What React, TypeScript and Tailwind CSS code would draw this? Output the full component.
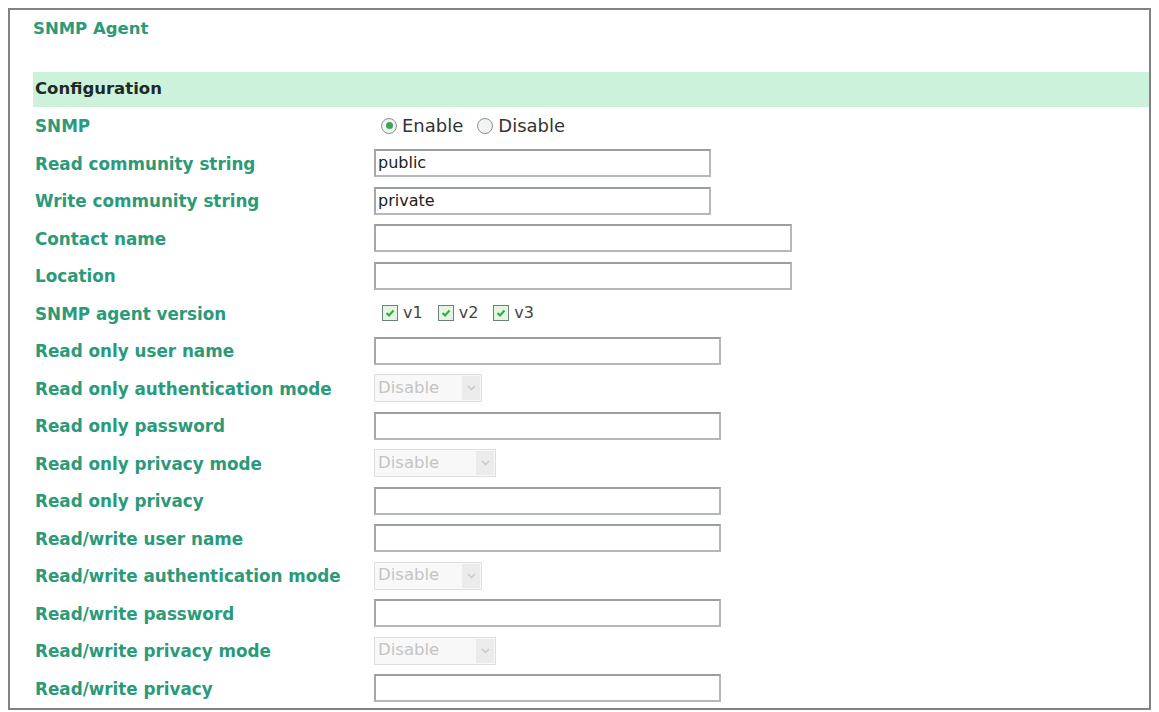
import type { ReactNode } from "react";

type Field =
  | { kind: "radio"; label: string }
  | { kind: "text"; label: string; width: string; value?: string }
  | { kind: "checks"; label: string }
  | { kind: "select"; label: string; width: string };

const FIELDS: Field[] = [
  { kind: "radio", label: "SNMP" },
  { kind: "text", label: "Read community string", width: "w-[337px]", value: "public" },
  { kind: "text", label: "Write community string", width: "w-[337px]", value: "private" },
  { kind: "text", label: "Contact name", width: "w-[418px]" },
  { kind: "text", label: "Location", width: "w-[418px]" },
  { kind: "checks", label: "SNMP agent version" },
  { kind: "text", label: "Read only user name", width: "w-[347px]" },
  { kind: "select", label: "Read only authentication mode", width: "w-[108px]" },
  { kind: "text", label: "Read only password", width: "w-[347px]" },
  { kind: "select", label: "Read only privacy mode", width: "w-[122px]" },
  { kind: "text", label: "Read only privacy", width: "w-[347px]" },
  { kind: "text", label: "Read/write user name", width: "w-[347px]" },
  { kind: "select", label: "Read/write authentication mode", width: "w-[108px]" },
  { kind: "text", label: "Read/write password", width: "w-[347px]" },
  { kind: "select", label: "Read/write privacy mode", width: "w-[122px]" },
  { kind: "text", label: "Read/write privacy", width: "w-[347px]" },
];

function Radio({ on, children }: { on?: boolean; children: ReactNode }) {
  return (
    <span className="flex items-center gap-[5px]">
      <span className="w-[16px] h-[16px] rounded-full border border-[#8a8f8f] bg-[#f2f4f4] flex items-center justify-center">
        {on && <span className="w-[7px] h-[7px] rounded-full bg-[#3aa655]" />}
      </span>
      <span>{children}</span>
    </span>
  );
}

function Check({ children }: { children: ReactNode }) {
  return (
    <span className="flex items-center gap-[5px]">
      <span className="w-[16px] h-[16px] border border-[#6f7f80] bg-[#e4f5e4] flex items-center justify-center">
        <svg width="12" height="12" viewBox="0 0 12 12">
          <path d="M2.5 6 L5 8.5 L9.5 3.5" fill="none" stroke="#35a844" strokeWidth="2" />
        </svg>
      </span>
      <span>{children}</span>
    </span>
  );
}

function TextBox({ width, value }: { width: string; value?: string }) {
  return (
    <div
      className={`${width} h-[28px] border-2 border-[#b4b8b8] border-t-[#9a9e9e] border-l-[#a4a8a8] bg-white flex items-center px-[2px] text-[16px] text-[#222]`}
    >
      {value}
    </div>
  );
}

function Select({ width }: { width: string }) {
  return (
    <div className={`${width} h-[28px] border border-[#dedede] bg-[#f8f8f8] flex items-center justify-between text-[16.5px] text-[#c4c4c4]`}>
      <span className="pl-[3px]">Disable</span>
      <span className="w-[18px] h-[24px] mr-[1px] bg-[#ebebeb] flex items-center justify-center">
        <svg width="9" height="6" viewBox="0 0 9 6">
          <path d="M1 1 L4.5 4.5 L8 1" fill="none" stroke="#c8c8c8" strokeWidth="1.5" />
        </svg>
      </span>
    </div>
  );
}

function Control({ field }: { field: Field }) {
  switch (field.kind) {
    case "radio":
      return (
        <div className="flex items-center gap-[14px] pl-[7px] text-[18px] text-[#333]">
          <Radio on>Enable</Radio>
          <Radio>Disable</Radio>
        </div>
      );
    case "checks":
      return (
        <div className="flex items-center gap-[15px] pl-[8px] text-[16px] text-[#444]">
          <Check>v1</Check>
          <Check>v2</Check>
          <Check>v3</Check>
        </div>
      );
    case "select":
      return <Select width={field.width} />;
    default:
      return <TextBox width={field.width} value={field.value} />;
  }
}

export default function App() {
  return (
    <div className="w-[1159px] h-[712px] bg-white p-[8px] font-['DejaVu_Sans',Verdana,sans-serif]">
      <div className="h-[702px] border-2 border-[#828282] pl-[23px]">
        <h1 className="mt-[9px] h-[20px] leading-[20px] text-[16.5px] font-bold text-[#2a9a78]">SNMP Agent</h1>
        <div className="mt-[33px] h-[35px] bg-[#cdf2dc] flex items-center pl-[2px] text-[16.5px] font-bold text-[#1e2a24]">
          Configuration
        </div>
        {FIELDS.map((f) => (
          <div key={f.label} className="h-[37.5px] flex items-center">
            <div className="w-[341px] pl-[2px] pt-[2px] text-[16.8px] font-bold text-[#2a9a78]">{f.label}</div>
            <Control field={f} />
          </div>
        ))}
      </div>
    </div>
  );
}
